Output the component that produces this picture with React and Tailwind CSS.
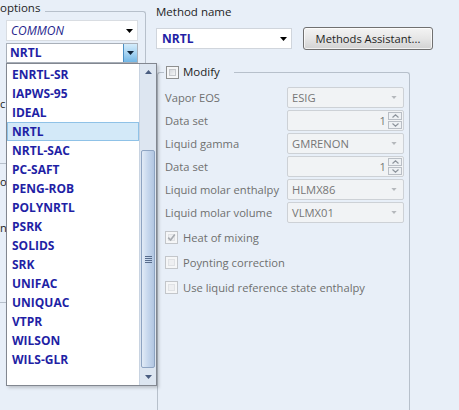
import React from "react";

const items = ["ENRTL-SR","IAPWS-95","IDEAL","NRTL","NRTL-SAC","PC-SAFT","PENG-ROB","POLYNRTL","PSRK","SOLIDS","SRK","UNIFAC","UNIQUAC","VTPR","WILSON","WILS-GLR"];

function Tri({ up = false, color = "#000", w = 7, h = 4 }) {
  return (
    <svg width={w} height={h} viewBox="0 0 7 4" className="block">
      {up ? <path d="M0 4 L3.5 0 L7 4 Z" fill={color} /> : <path d="M0 0 L7 0 L3.5 4 Z" fill={color} />}
    </svg>
  );
}

function DisabledCombo({ value }) {
  return (
    <div className="w-[117px] h-[21px] flex items-center justify-between rounded-[2px] border border-[#cdd1d6] bg-[#f1f3f5] pl-[4px] pr-[6px] text-[#767676]">
      <span>{value}</span>
      <Tri color="#b5b8bc" w={6} h={3} />
    </div>
  );
}

function SpinBox() {
  return (
    <div className="w-[117px] h-[21px] flex items-center justify-end rounded-[2px] border border-[#cdd1d6] bg-[#f1f3f5] pr-[1px] text-[#767676]">
      <span className="mr-[2px]">1</span>
      <div className="flex flex-col gap-[1px]">
        <div className="w-[14px] h-[8px] border border-[#b9bec5] bg-[#eef1f4] flex items-center justify-center">
          <svg width="7" height="4" viewBox="0 0 7 4"><path d="M0.5 3.5 L3.5 0.8 L6.5 3.5" stroke="#8d949c" strokeWidth="1.2" fill="none" /></svg>
        </div>
        <div className="w-[14px] h-[8px] border border-[#b9bec5] bg-[#eef1f4] flex items-center justify-center">
          <svg width="7" height="4" viewBox="0 0 7 4"><path d="M0.5 0.5 L3.5 3.2 L6.5 0.5" stroke="#8d949c" strokeWidth="1.2" fill="none" /></svg>
        </div>
      </div>
    </div>
  );
}

function CheckBox({ checked = false, enabled = false }) {
  return (
    <div className={`w-[13px] h-[13px] shrink-0 border ${enabled ? "border-[#8e8f8f]" : "border-[#c3c6ca]"} bg-[#f5f6f7] p-[2px]`}>
      <div className={`w-full h-full border ${enabled ? "border-[#c6c9cd] bg-gradient-to-br from-[#d6d9dd] to-[#f4f5f6]" : "border-[#e0e2e5] bg-[#eeeff1]"} flex items-center justify-center`}>
        {checked && (
          <svg width="9" height="9" viewBox="0 0 9 9" className="-m-[2px]"><path d="M1.2 4.6 L3.6 7 L7.8 1.4" stroke="#a7abb0" strokeWidth="1.6" fill="none" /></svg>
        )}
      </div>
    </div>
  );
}

export default function App() {
  return (
    <div className="relative w-[459px] h-[410px] overflow-hidden bg-[#e8eff8] font-['Open_Sans',sans-serif] text-[11.2px] leading-4 text-[#1e1e1e] flex">
      {/* Left options group */}
      <div className="w-[146px] shrink-0 flex flex-col">
        <div className="flex items-start h-[16px]">
          <span className="leading-4 text-[11.5px]">options</span>
          <div className="flex-1 ml-[5px] mt-[11px] h-[5px] border-t border-r border-[#b7c0cb] rounded-tr-[3px]" />
        </div>
        <div className="h-[360px] border-r border-[#b7c0cb] pl-[6px] pr-[7px] pt-[4px] flex flex-col">
          <div className="h-[21px] flex items-center justify-between border border-[#d9dde2] bg-white pl-[4px] pr-[4px]">
            <span className="italic text-[12px] text-[#24248c]">COMMON</span>
            <Tri />
          </div>
          <div className="mt-[2px] h-[20px] flex items-stretch border border-[#a9b0b9] bg-white">
            <span className="flex-1 flex items-center pl-[3px] font-bold text-[12px] text-[#1f1fa5]">NRTL</span>
            <div className="w-[14px] border-l border-[#4c8fc4] bg-gradient-to-b from-[#d4ecfb] via-[#a8d4f2] to-[#72b7e6] flex items-center justify-center">
              <Tri color="#10253b" />
            </div>
          </div>
          <div className="-ml-[6px] flex flex-col">
            <span className="mt-[33px] leading-4">c</span>
            <div className="mt-[51px] w-[6px] border-t border-[#b7c0cb]" />
            <span className="mt-[10px] leading-4">o</span>
            <span className="mt-[30px] leading-4">n</span>
            <div className="mt-[66px] w-[6px] border-t border-[#b7c0cb]" />
          </div>
        </div>
      </div>

      {/* Right side */}
      <div className="ml-[10px] flex flex-col">
        <div className="pt-[4px] leading-4 text-[11.5px]">Method name</div>
        <div className="mt-[7px] h-[23px] flex items-center">
          <div className="w-[136px] h-[21px] flex items-center justify-between border border-[#d0d5dc] bg-white pl-[5px] pr-[4px]">
            <span className="font-bold text-[12px] text-[#1f1fa5]">NRTL</span>
            <Tri />
          </div>
          <div className="ml-[11px] w-[130px] h-[23px] rounded-[3px] border border-[#707070] bg-gradient-to-b from-[#f4f4f4] via-[#e6e6e6] to-[#d2d2d2] shadow-[inset_0_0_0_1px_rgba(255,255,255,0.7)] flex items-center justify-center">
            Methods Assistant...
          </div>
        </div>

        {/* Modify group */}
        <div className="mt-[14px] ml-[1px] w-[253px] flex flex-col">
          <div className="h-[16px] flex items-center">
            <div className="self-start mt-[8px] w-[7px] h-[8px] border-t border-l border-[#b7c0cb] rounded-tl-[3px]" />
            <div className="ml-[2px]"><CheckBox enabled /></div>
            <span className="ml-[4px] text-[11.5px]">Modify</span>
            <div className="self-start flex-1 ml-[14px] mt-[8px] h-[8px] border-t border-r border-[#b7c0cb] rounded-tr-[3px]" />
          </div>
          <div className="h-[340px] border-l border-r border-[#b7c0cb] pl-[7px] pt-[7px] flex flex-col text-[#6f6f6f]">
            <div className="flex flex-col gap-[2px]">
              <div className="h-[21px] flex items-center"><span className="w-[122px]">Vapor EOS</span><DisabledCombo value="ESIG" /></div>
              <div className="h-[21px] flex items-center"><span className="w-[122px]">Data set</span><SpinBox /></div>
              <div className="h-[21px] flex items-center"><span className="w-[122px]">Liquid gamma</span><DisabledCombo value="GMRENON" /></div>
              <div className="h-[21px] flex items-center"><span className="w-[122px]">Data set</span><SpinBox /></div>
              <div className="h-[21px] flex items-center"><span className="w-[122px]">Liquid molar enthalpy</span><DisabledCombo value="HLMX86" /></div>
              <div className="h-[21px] flex items-center"><span className="w-[122px]">Liquid molar volume</span><DisabledCombo value="VLMX01" /></div>
            </div>
            <div className="mt-[6px] flex flex-col gap-[8px]">
              <div className="h-[17px] flex items-center"><CheckBox checked /><span className="ml-[5px]">Heat of mixing</span></div>
              <div className="h-[17px] flex items-center"><CheckBox /><span className="ml-[5px]">Poynting correction</span></div>
              <div className="h-[17px] flex items-center"><CheckBox /><span className="ml-[5px]">Use liquid reference state enthalpy</span></div>
            </div>
          </div>
        </div>
      </div>

      {/* Dropdown list overlay */}
      <div className="absolute left-[6px] top-[63px] w-[151px] h-[323px] border border-[#828790] bg-white shadow-[2px_2px_3px_rgba(0,0,0,0.18)] flex">
        <div className="w-[132px] pt-[1px] flex flex-col">
          {items.map((it) => (
            <div
              key={it}
              className={`h-[19px] flex items-center pl-[5px] font-bold text-[12px] text-[#1f1fa5] ${it === "NRTL" ? "bg-[#d3e9f8] shadow-[inset_0_0_0_1px_#8fc2e7]" : ""}`}
            >
              {it}
            </div>
          ))}
        </div>
        <div className="w-[17px] flex flex-col bg-[#dde6f1] border-l border-[#c8d3e1]">
          <div className="h-[16px] flex items-center justify-center">
            <Tri up color="#4a5d80" />
          </div>
          <div className="flex-1 flex flex-col">
            <div className="h-[70px]" />
            <div className="h-[218px] mx-[1px] rounded-[2px] border border-[#8ea4c2] bg-gradient-to-r from-[#e2ebf6] via-[#c6d7ed] to-[#b2c6e1] flex flex-col items-center justify-center gap-[1px]">
              <div className="w-[7px] h-[1px] bg-[#586c8c]" />
              <div className="w-[7px] h-[1px] bg-[#586c8c]" />
              <div className="w-[7px] h-[1px] bg-[#586c8c]" />
              <div className="w-[7px] h-[1px] bg-[#586c8c]" />
            </div>
          </div>
          <div className="h-[16px] flex items-center justify-center">
            <Tri color="#4a5d80" />
          </div>
        </div>
      </div>
    </div>
  );
}
